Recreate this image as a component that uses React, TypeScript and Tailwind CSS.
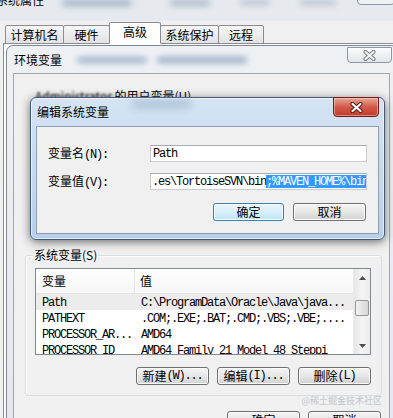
import React from 'react';

const cjk = "font-['Noto_Sans_CJK_SC',sans-serif]";

// half-width ASCII like SimSun (6px advance)
function M({ children }: { children: React.ReactNode }) {
  return <span className="font-['Liberation_Mono',monospace] text-[12px] tracking-[-1.2px]">{children}</span>;
}

function CloseX({ fill, edge, w = 13, h = 11 }: { fill: string; edge: string; w?: number; h?: number }) {
  return (
    <svg width={w} height={h} viewBox="0 0 13 11">
      <path d="M2.5 2 L10.5 9 M10.5 2 L2.5 9" stroke={edge} strokeWidth="4.2" strokeLinecap="round" />
      <path d="M2.5 2 L10.5 9 M10.5 2 L2.5 9" stroke={fill} strokeWidth="2.2" strokeLinecap="round" />
    </svg>
  );
}

function Btn({ children, focus, w }: { children: React.ReactNode; focus?: boolean; w: string }) {
  return (
    <div
      className={
        'flex items-center justify-center h-[18px] rounded-[3px] border leading-none ' +
        w +
        (focus
          ? ' border-[#3c7fb1] bg-linear-to-b from-[#eaf6fd] via-[#d7effc] to-[#bde5fb] shadow-[inset_0_0_0_1px_#f4fbff]'
          : ' border-[#707070] bg-linear-to-b from-[#f4f4f4] via-[#e6e6e6] to-[#d2d2d2] shadow-[inset_0_0_0_1px_#fbfbfb]')
      }
    >
      {children}
    </div>
  );
}

function Tri({ down }: { down?: boolean }) {
  return (
    <svg width="7" height="4" viewBox="0 0 7 4">
      <path d={down ? 'M0 0 L7 0 L3.5 4 Z' : 'M0 4 L7 4 L3.5 0 Z'} fill="#4d4d4d" />
    </svg>
  );
}

const rows = [
  { name: 'Path', value: 'C:\\ProgramData\\Oracle\\Java\\java...', sel: true },
  { name: 'PATHEXT', value: '.COM;.EXE;.BAT;.CMD;.VBS;.VBE;....' },
  { name: 'PROCESSOR_AR...', value: 'AMD64' },
  { name: 'PROCESSOR_ID', value: 'AMD64 Family 21 Model 48 Steppi' },
];

const tabs = [
  { label: '计算机名', w: 'w-[59px]' },
  { label: '硬件', w: 'w-[47px]' },
  { label: '高级', w: 'w-[52px]', active: true },
  { label: '系统保护', w: 'w-[59px]' },
  { label: '远程', w: 'w-[46px]' },
];

export default function App() {
  return (
    <div className={`relative w-[393px] h-[418px] overflow-hidden bg-[#f0f0f0] text-[12px] text-black ${cjk}`}>
      {/* 系统属性 */}
      <div className="flex flex-col h-full">
        <div className="relative h-[21px] bg-[#e6eaee] shrink-0">
          <div className="-ml-[4px] -mt-[8px] leading-[16px] text-[12px]">系统属性</div>
          <span className="absolute left-[62px] top-[0px] w-[70px] h-[6px] rounded-full bg-[#9fb0c4] blur-[3px]" />
          <span className="absolute left-[170px] top-[0px] w-[40px] h-[6px] rounded-full bg-[#a9b8c9] blur-[3px]" />
          <span className="absolute left-[240px] top-[0px] w-[30px] h-[5px] rounded-full bg-[#b3c0ce] blur-[3px]" />
          <span className="absolute left-[300px] top-[0px] w-[36px] h-[5px] rounded-full bg-[#b3c0ce] blur-[3px]" />
          <div className="absolute right-[-2px] -top-[12px] w-[38px] h-[17px] rounded-b-[4px] border border-[#8d96a1] bg-[#eef0f2]" />
        </div>
        <div className="relative z-10 flex items-end h-[23px] -mb-px pl-[5px] shrink-0">
          {tabs.map((t, i) => (
            <div
              key={t.label}
              className={
                'flex items-center justify-center border border-[#898c95] rounded-t-[2px] ' +
                t.w +
                (i > 0 ? ' -ml-px' : '') +
                (t.active
                  ? ' h-[22px] bg-white border-b-white relative z-10 pb-[2px]'
                  : ' h-[19px] border-b-[#898c95] bg-linear-to-b from-[#f6f6f6] to-[#e2e2e2]')
              }
            >
              {t.label}
            </div>
          ))}
        </div>
        <div className="ml-[3px] flex-1 border-t border-l border-[#898c95] bg-[#fbfbfb]" />
      </div>

      {/* 环境变量 */}
      <div className="absolute left-[6px] top-[45px] w-[392px] h-[380px] flex flex-col rounded-t-[7px] border border-[#7f8994] bg-linear-to-b from-[#eef1f4] to-[#e4e8ec]">
        <div className="relative h-[27px] flex items-center pl-[7px] shrink-0">
          <span className="relative z-10">环境变量</span>
          <span className="absolute left-[70px] top-[11px] w-[70px] h-[6px] rounded-full bg-[#9cb0c8] blur-[3px]" />
          <span className="absolute left-[150px] top-[11px] w-[90px] h-[6px] rounded-full bg-[#94a9c3] blur-[3px]" />
          <div className="absolute top-[1px] right-[5px] w-[45px] h-[16px] rounded-b-[4px] border border-[#8d97a2] bg-linear-to-b from-[#fafbfc] to-[#e2e6ea] flex items-center justify-center">
            <CloseX fill="#f2f2f2" edge="#7a7f86" />
          </div>
        </div>
        <div className="flex-1 ml-[6px] mr-[7px] border-t border-l border-r border-[#a0a7b0] bg-[#f0f0f0] flex flex-col">
          <div className="pt-[14px] pl-[21px] leading-[16px] h-[30px] shrink-0">
            <span className="blur-[1px]">Administrator</span> 的用户变量(U)
          </div>
          <div className="h-[143px] shrink-0" />
          <fieldset className="ml-[11px] w-[357px] border border-[#d5dfe5] rounded-[3px] px-[9px] pb-[10px] shadow-[inset_1px_1px_0_#fff]">
            <legend className="-ml-[2px] px-[1px] leading-[16px]">系统变量(S)</legend>
            <div className="mt-[5px] w-[336px] h-[87px] border border-[#828790] bg-white flex">
              <div className="flex-1 flex flex-col overflow-hidden">
                <div className="h-[25px] flex shrink-0 border-b border-[#e3e3e3] bg-linear-to-b from-white to-[#f5f5f5]">
                  <div className="w-[99px] pl-[6px] flex items-center border-r border-[#e3e3e3]">变量</div>
                  <div className="pl-[5px] flex items-center">值</div>
                </div>
                {rows.map((r) => (
                  <div key={r.name} className={'h-[16px] flex items-center shrink-0' + (r.sel ? ' bg-[#ececec]' : '')}>
                    <div className="w-[99px] pl-[6px] whitespace-nowrap overflow-hidden"><M>{r.name}</M></div>
                    <div className="pl-[6px] whitespace-nowrap"><M>{r.value}</M></div>
                  </div>
                ))}
              </div>
              <div className="w-[17px] flex flex-col bg-linear-to-r from-[#e6e6e6] via-[#f4f4f4] to-[#ececec] border-l border-[#eaeaea]">
                <div className="h-[17px] flex items-center justify-center"><Tri /></div>
                <div className="mt-[14px] mx-[1px] h-[16px] rounded-[2px] border border-[#979797] bg-linear-to-r from-[#f2f2f2] to-[#d6d6d6]" />
                <div className="flex-1" />
                <div className="h-[17px] flex items-center justify-center"><Tri down /></div>
              </div>
            </div>
            <div className="mt-[12px] mr-[1px] flex justify-end gap-2">
              <Btn w="w-[73px]">新建<M>(W)...</M></Btn>
              <Btn w="w-[73px]">编辑<M>(I)...</M></Btn>
              <Btn w="w-[73px]">删除<M>(L)</M></Btn>
            </div>
          </fieldset>
          <div className="h-[10px] pr-[7px] flex justify-end items-center text-[9px] leading-[10px] text-[#c2c6cb]">@稀土掘金技术社区</div>
          <div className="mt-[5px] pr-[8px] flex justify-end gap-2">
            <Btn w="w-[73px]">确定</Btn>
            <Btn w="w-[73px]">取消</Btn>
          </div>
        </div>
      </div>

      {/* 编辑系统变量 */}
      <div className="absolute left-[30px] top-[97px] w-[355px] h-[143px] flex flex-col rounded-[6px] border border-[#3e5b7c] bg-linear-to-b from-[#d6e4f4] via-[#c6d9ef] to-[#b9cfe9] shadow-[0_2px_10px_rgba(0,0,0,0.55),inset_0_0_0_1px_rgba(255,255,255,0.6)]">
        <div className="relative h-[28px] flex items-center pl-[6px] shrink-0">
          <span className="relative z-10">编辑系统变量</span>
          <span className="absolute left-[100px] top-[2px] w-[60px] h-[8px] rounded-full bg-[#8fa6c2] blur-[4px] opacity-60" />
          <div className="absolute -top-px right-[5px] w-[46px] h-[20px] rounded-b-[4px] border border-[#6b1d17] bg-linear-to-b from-[#e7a596] via-[#d2594a] to-[#c23a2b] shadow-[inset_0_0_0_1px_rgba(255,220,210,0.5)] flex items-center justify-center">
            <CloseX fill="#ffffff" edge="#5a1a14" />
          </div>
        </div>
        <div className="mx-[5px] h-[108px] border border-[#8aa0b8] bg-[#f0f0f0] flex flex-col pt-[18px] pl-[11px] pr-[11px]">
          <div className="flex items-center h-[17px]">
            <div className="w-[102px]">变量名<M>(N):</M></div>
            <div className="w-[217px] h-[17px] border border-[#c9ccd1] border-t-[#a7aaaf] bg-white flex items-center pl-[2px] leading-none">
              <M>Path</M>
            </div>
          </div>
          <div className="flex items-center h-[17px] mt-[11px]">
            <div className="w-[102px]">变量值<M>(V):</M></div>
            <div className="w-[217px] h-[17px] border border-[#c9ccd1] border-t-[#a7aaaf] bg-white flex items-center pl-px leading-none overflow-hidden whitespace-nowrap">
              <M>.es\TortoiseSVN\bin</M>
              <span className="bg-[#3399ff] text-white h-[13px] flex items-center"><M>;%MAVEN_HOME%\bin</M></span>
            </div>
          </div>
          <div className="mt-[13px] pr-px flex justify-end gap-[9px]">
            <Btn focus w="w-[71px]">确定</Btn>
            <Btn w="w-[73px]">取消</Btn>
          </div>
        </div>
      </div>
    </div>
  );
}
